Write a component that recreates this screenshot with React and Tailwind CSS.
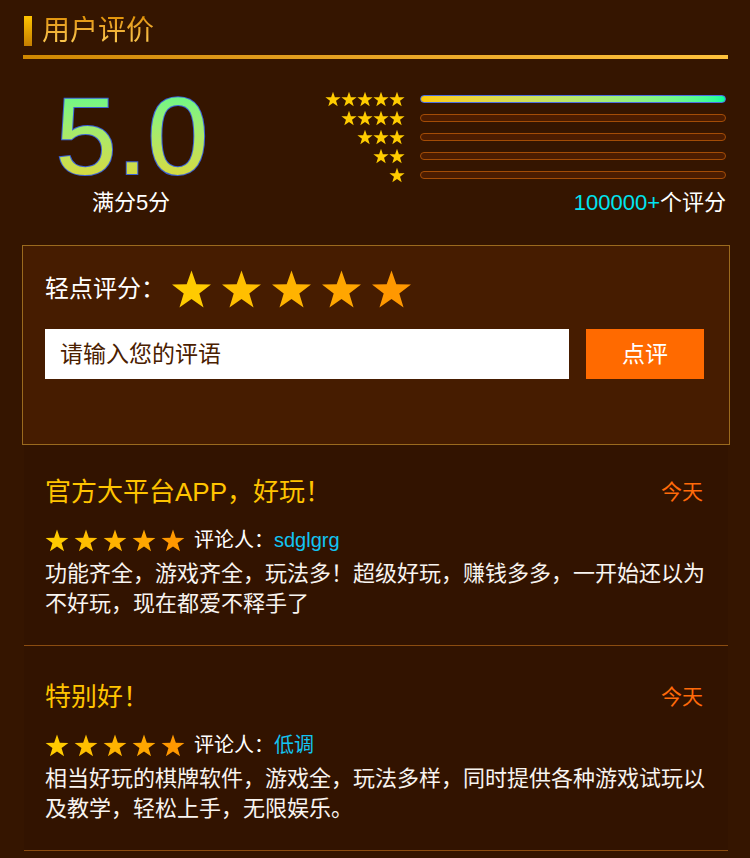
import { useState } from "react"

const STAR_POINTS =
  "50,2.6 61.76,36.42 97.55,37.15 69.02,58.78 79.39,93.05 50,72.6 20.61,93.05 30.98,58.78 2.45,37.15 38.24,36.42"

function Star({ color, className }) {
  return (
    <svg viewBox="0 0 100 96" className={className}>
      <polygon points={STAR_POINTS} fill={color} />
    </svg>
  )
}

const starColors = ["#ffcb00", "#ffbf00", "#ffb300", "#ffa600", "#ff9800"]

const reviews = [
  {
    title: "官方大平台APP，好玩！",
    user: "sdglgrg",
    text: "功能齐全，游戏齐全，玩法多！超级好玩，赚钱多多，一开始还以为不好玩，现在都爱不释手了",
  },
  {
    title: "特别好！",
    user: "低调",
    text: "相当好玩的棋牌软件，游戏全，玩法多样，同时提供各种游戏试玩以及教学，轻松上手，无限娱乐。",
  },
]

export default function App() {
  const [comment, setComment] = useState("")

  return (
    <div className="min-h-screen w-full bg-[#351500] font-['Liberation_Sans','Noto_Sans_CJK_SC',sans-serif] text-white">
      {/* 标题 */}
      <div className="px-[23px] pt-[16px]">
        <div className="flex items-center h-[30px]">
          <div className="ml-[1px] w-[8px] h-[30px] bg-linear-to-b from-[#ffc400] to-[#c47e00]"></div>
          <h1 className="ml-[10px] text-[28px] leading-[30px] bg-linear-to-b from-[#e09200] to-[#ffcf55] bg-clip-text text-transparent">
            用户评价
          </h1>
        </div>
        <div className="mt-[9px] h-[4px] w-[705px] bg-linear-to-r from-[#d08800] to-[#ffc23c]"></div>
      </div>

      {/* 评分概览 */}
      <div className="flex items-start">
        <div className="ml-[24px] w-[216px] mt-[30px] flex flex-col items-center">
          <div className="relative text-[110px] leading-[94px]">
            <span className="absolute inset-0 text-transparent [-webkit-text-stroke:2px_#3b62d6]">5.0</span>
            <span className="relative bg-linear-to-b from-[#1cff96] to-[#e8d01c] bg-clip-text text-transparent">
              5.0
            </span>
          </div>
          <div className="mt-[7px] text-[22px] leading-[26px] -ml-[2px]">满分5分</div>
        </div>

        <div className="ml-auto mr-[24px] mt-[30px] w-[406px]">
          {[5, 4, 3, 2, 1].map((n) => (
            <div key={n} className="flex items-center h-[19px]">
              <div className="w-[85px] flex justify-end">
                {Array.from({ length: n }).map((_, i) => (
                  <Star key={i} color="#ffcc00" className="w-[16px] h-[16px]" />
                ))}
              </div>
              <div
                className={
                  n === 5
                    ? "ml-[15px] w-[306px] h-[8px] rounded-full border border-[#4a6ee0] bg-linear-to-r from-[#ffcc00] to-[#00ff9c]"
                    : "ml-[15px] w-[306px] h-[8px] rounded-full border border-[#a44c06] bg-[#4c1c00]"
                }
              ></div>
            </div>
          ))}
          <div className="mt-[6px] text-right text-[22px] leading-[26px]">
            <span className="text-[#00e4f0]">100000+</span>个评分
          </div>
        </div>
      </div>

      {/* 轻点评分 */}
      <div className="mt-[29px] ml-[22px] mr-[20px] border border-[#9b6a1e] bg-[#461c00] px-[22px] pt-[22px] pb-[65px]">
        <div className="flex items-center h-[41px]">
          <span className="text-[24px] leading-[40px]">轻点评分：</span>
          <div className="ml-[6px] flex gap-[9px]">
            {starColors.map((c, i) => (
              <Star key={i} color={c} className="w-[41px] h-[40px]" />
            ))}
          </div>
        </div>
        <div className="mt-[20px] flex gap-[17px]">
          <input
            value={comment}
            onChange={(e) => setComment(e.target.value)}
            placeholder="请输入您的评语"
            className="w-[524px] h-[50px] bg-white px-[15px] text-[23px] text-[#4a2000] placeholder:text-[#4a2000] outline-none"
          />
          <button className="w-[118px] h-[50px] bg-[#ff6a00] text-[23px] text-white">点评</button>
        </div>
      </div>

      {/* 评论列表 */}
      <div className="ml-[24px] mr-[22px]">
        {reviews.map((r) => (
          <div
            key={r.user}
            className="bg-[#321300] px-[21px] pt-[34px] first:pt-[30px] pb-[26px] border-b border-[#8b4c10]"
          >
            <div className="flex items-center justify-between h-[34px]">
              <h3 className="text-[26px] leading-[34px] text-[#ffc400]">{r.title}</h3>
              <span className="mr-[4px] text-[21px] text-[#ff6a0a]">今天</span>
            </div>
            <div className="mt-[17px] flex items-center h-[28px]">
              <div className="flex gap-[5px]">
                {starColors.map((c, i) => (
                  <Star key={i} color={c} className="w-[24px] h-[23px]" />
                ))}
              </div>
              <span className="ml-[9px] text-[20px]">评论人：</span>
              <span className="text-[20px] text-[#12c4f2]">{r.user}</span>
            </div>
            <p className="mt-[5px] text-[22px] leading-[30px] text-[#f8f4f0]">{r.text}</p>
          </div>
        ))}
      </div>
    </div>
  )
}
